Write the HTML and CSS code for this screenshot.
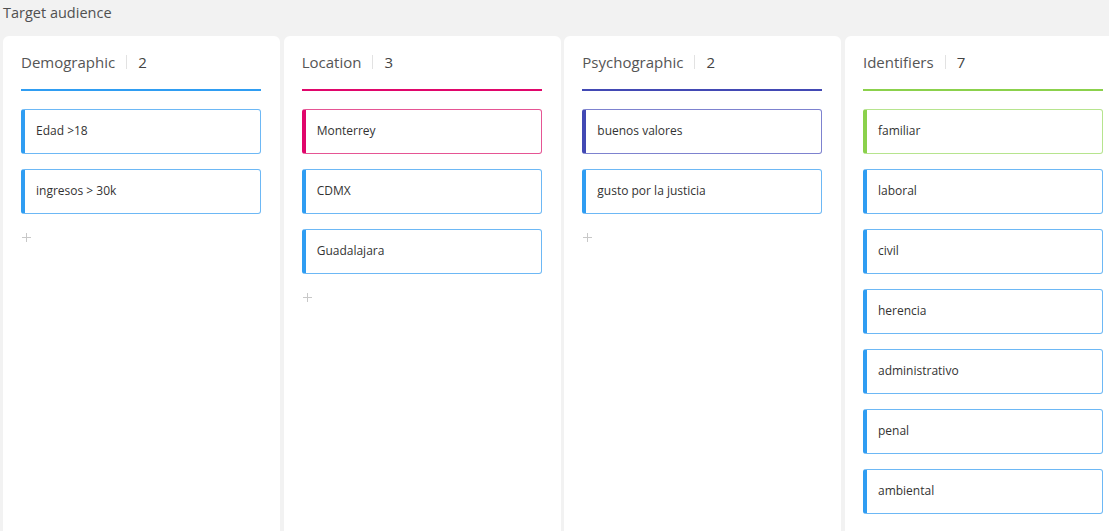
FILE: index.html
```html
<!DOCTYPE html>
<html lang="en">
<head>
    <meta charset="UTF-8">
    <meta name="viewport" content="width=device-width, initial-scale=1.0">
    <title>Target audience</title>
    <link rel="stylesheet" href="styles.css">
</head>
<body>
    <div class="page-title">Target audience</div>
    <div class="board">
        <div class="column blue">
            <div class="column-head">
                <span class="name">Demographic</span><span class="sep"></span><span class="count">2</span>
            </div>
            <div class="cards">
                <div class="card">Edad &gt;18</div>
                <div class="card">ingresos &gt; 30k</div>
                <div class="add"><svg width="9" height="9" viewBox="0 0 9 9"><path d="M4.5 0v9M0 4.5h9" stroke="#c8c8c8" stroke-width="1"/></svg></div>
            </div>
        </div>
        <div class="column pink">
            <div class="column-head">
                <span class="name">Location</span><span class="sep"></span><span class="count">3</span>
            </div>
            <div class="cards">
                <div class="card accent">Monterrey</div>
                <div class="card">CDMX</div>
                <div class="card">Guadalajara</div>
                <div class="add"><svg width="9" height="9" viewBox="0 0 9 9"><path d="M4.5 0v9M0 4.5h9" stroke="#c8c8c8" stroke-width="1"/></svg></div>
            </div>
        </div>
        <div class="column indigo">
            <div class="column-head">
                <span class="name">Psychographic</span><span class="sep"></span><span class="count">2</span>
            </div>
            <div class="cards">
                <div class="card accent">buenos valores</div>
                <div class="card">gusto por la justicia</div>
                <div class="add"><svg width="9" height="9" viewBox="0 0 9 9"><path d="M4.5 0v9M0 4.5h9" stroke="#c8c8c8" stroke-width="1"/></svg></div>
            </div>
        </div>
        <div class="column green">
            <div class="column-head">
                <span class="name">Identifiers</span><span class="sep"></span><span class="count">7</span>
            </div>
            <div class="cards">
                <div class="card accent">familiar</div>
                <div class="card">laboral</div>
                <div class="card">civil</div>
                <div class="card">herencia</div>
                <div class="card">administrativo</div>
                <div class="card">penal</div>
                <div class="card">ambiental</div>
            </div>
        </div>
    </div>
</body>
</html>
```

FILE: styles.css
```css
html, body {
    height: 100%;
    overflow: hidden;
}
body {
    margin: 0;
    padding: 0 0 0 3px;
    background-color: #f2f2f2;
    font-family: "Open Sans", "Noto Sans", sans-serif;
    color: #444;
}
.page-title {
    height: 36px;
    font-size: 14.5px;
    line-height: 26px;
    color: #505050;
}
.board {
    display: flex;
    gap: 3.67px;
}
.column {
    flex: 0 0 277px;
    min-height: 520px;
    box-sizing: border-box;
    padding: 0 19px 0 18px;
    background-color: #fff;
    border-radius: 6px;
}
.column-head {
    display: flex;
    align-items: center;
    height: 22px;
    padding: 15px 0 16px;
    border-bottom: 2px solid #2f9df2;
    font-size: 15px;
    color: #555;
}
.sep {
    width: 1px;
    height: 14px;
    margin: 0 11px;
    background-color: #e2e2e2;
}
.count {
    color: #444;
}
.cards {
    display: flex;
    flex-direction: column;
    gap: 15px;
    padding-top: 18px;
}
.card {
    height: 41px;
    box-sizing: content-box;
    padding: 0 0 2px 11px;
    display: flex;
    align-items: center;
    font-size: 12px;
    color: #333;
    border: 1px solid #6db8f5;
    border-left: 4px solid #2f9df2;
    border-radius: 3px;
}
.add {
    height: 9px;
    padding: 4px 0 0 1px;
    line-height: 0;
}

/* column accents */
.pink .column-head { border-bottom-color: #e0066b; }
.pink .card.accent { border-color: #e55594; border-left-color: #e0066b; }
.indigo .column-head { border-bottom-color: #4249b4; }
.indigo .card.accent { border-color: #7d82cf; border-left-color: #4249b4; }
.green .column-head { border-bottom-color: #8bd14c; }
.green .card.accent { border-color: #b6e48e; border-left-color: #8bd14c; }
```
